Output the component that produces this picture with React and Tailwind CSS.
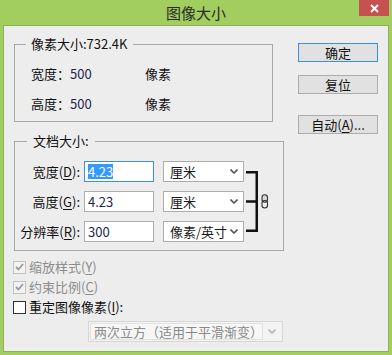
const font = { fontFamily: '"Noto Sans CJK SC", "Noto Sans", sans-serif' }

function Chevron({ color = '#555' }) {
  return (
    <svg width="8" height="5" viewBox="0 0 8 5" className="shrink-0">
      <path d="M0.5 0.5 L4 4 L7.5 0.5" fill="none" stroke={color} strokeWidth="1.6" />
    </svg>
  )
}

function Key({ children }) {
  return <span className="underline underline-offset-2">{children}</span>
}

function Field({ value, focused }) {
  return (
    <div
      className={`flex h-[21px] w-[70px] items-center border bg-white pl-[3px] text-[13px] ${
        focused ? 'border-[#3d8ee0]' : 'border-[#abadb3]'
      }`}
    >
      {focused ? (
        <span className="bg-[#3399ff] leading-[15px] text-white">{value}</span>
      ) : (
        <span className="leading-[15px] text-[#1c2650]">{value}</span>
      )}
    </div>
  )
}

function Unit({ text }) {
  return (
    <div className="flex h-[21px] w-[81px] items-center justify-between border border-[#acacac] bg-white pl-[6px] pr-[5px] text-[13px] text-[#1a1a1a]">
      <span className="leading-[15px]">{text}</span>
      <Chevron />
    </div>
  )
}

function Check({ checked, disabled, children }) {
  return (
    <div className="flex h-[20px] items-center">
      <span
        className={`grid h-[13px] w-[13px] place-items-center border ${
          disabled ? 'border-[#c2c2c2] bg-[#f3f3f3]' : 'border-[#333] bg-white'
        }`}
      >
        {checked && (
          <svg width="9" height="8" viewBox="0 0 9 8">
            <path d="M1 4 L3.5 6.5 L8 1" fill="none" stroke="#9a9a9a" strokeWidth="1.8" />
          </svg>
        )}
      </span>
      <span className={`ml-[3px] text-[13px] leading-[16px] ${disabled ? 'text-[#8c8c8c]' : 'text-[#111]'}`}>
        {children}
      </span>
    </div>
  )
}

function Button({ primary, children }) {
  return (
    <button
      className={`h-[19px] w-[80px] border bg-[#e1e1e1] text-[13px] leading-[15px] text-[#111] ${
        primary ? 'border-[#3c8fe0]' : 'border-[#adadad]'
      }`}
    >
      {children}
    </button>
  )
}

export default function App() {
  return (
    <div className="flex h-[355px] w-[392px] flex-col bg-[#a2cd5f]" style={font}>
      <div className="relative flex h-[25px] shrink-0 items-center justify-center">
        <span className="text-[15px] leading-[18px] text-[#2b2b2b]">图像大小</span>
        <div className="absolute right-[3px] top-0 grid h-[16px] w-[30px] place-items-center bg-[#c75050]">
          <svg width="9" height="9" viewBox="0 0 9 9">
            <path d="M1 1 L8 8 M8 1 L1 8" stroke="#fff" strokeWidth="2" />
          </svg>
        </div>
      </div>

      <div className="mx-[3px] mb-[3px] flex flex-1 flex-col border border-[#8db157] bg-[#ededed]">
        <div className="flex items-start">
          <div className="ml-[10px] flex flex-col pt-[10px]">
            <fieldset className="w-[259px] border border-[#a8a8a8] pb-[9px]">
              <legend className="ml-[11px] px-[5px] text-[13px] leading-[16px] text-[#111]">像素大小:732.4K</legend>
              <div className="mt-[14px] flex pl-[16px] text-[13px] leading-[16px] text-[#111]">
                <span className="w-[114px]">
                  宽度：<span className="text-[#1c2650]">500</span>
                </span>
                <span>像素</span>
              </div>
              <div className="mt-[14px] flex pl-[16px] text-[13px] leading-[16px] text-[#111]">
                <span className="w-[114px]">
                  高度：<span className="text-[#1c2650]">500</span>
                </span>
                <span>像素</span>
              </div>
            </fieldset>

            <fieldset className="mt-[11px] w-[270px] border border-[#a8a8a8] pb-[8px]">
              <legend className="ml-[12px] px-[6px] text-[13px] leading-[16px] text-[#111]">文档大小:</legend>
              <div className="mt-[12px] flex items-center">
                <div className="grid grid-cols-[65px_70px_81px] items-center gap-x-[4px] gap-y-[9px] text-[13px] text-[#111]">
                  <span className="text-right leading-[16px]">
                    宽度(<Key>D</Key>):
                  </span>
                  <Field value="4.23" focused />
                  <div className="ml-[5px]">
                    <Unit text="厘米" />
                  </div>
                  <span className="text-right leading-[16px]">
                    高度(<Key>G</Key>):
                  </span>
                  <Field value="4.23" />
                  <div className="ml-[5px]">
                    <Unit text="厘米" />
                  </div>
                  <span className="whitespace-nowrap text-right leading-[16px]">
                    分辨率(<Key>R</Key>):
                  </span>
                  <Field value="300" />
                  <div className="ml-[5px]">
                    <Unit text="像素/英寸" />
                  </div>
                </div>
                <svg width="12" height="61" viewBox="0 0 12 61" className="ml-[7px] shrink-0">
                  <path d="M0 1.25 H10.75 V59.75 H0 M0 30.5 H10.75" fill="none" stroke="#111" strokeWidth="2.5" />
                </svg>
                <svg width="8" height="15" viewBox="0 0 8 15" className="ml-[3px] shrink-0">
                  <rect x="1" y="0.8" width="5.5" height="7.5" rx="2.7" fill="#d8d8d8" stroke="#333" strokeWidth="1.1" />
                  <rect x="1" y="6.5" width="5.5" height="7.5" rx="2.7" fill="none" stroke="#333" strokeWidth="1.1" />
                </svg>
              </div>
            </fieldset>
          </div>

          <div className="ml-[14px] flex flex-col pt-[17px]">
            <Button primary>确定</Button>
            <div className="mt-[9px]">
              <Button>复位</Button>
            </div>
            <div className="mt-[16px]">
              <Button>
                自动(<Key>A</Key>)...
              </Button>
            </div>
          </div>
        </div>

        <div className="ml-[9px] mt-[6px] flex flex-col">
          <Check checked disabled>
            缩放样式(<Key>Y</Key>)
          </Check>
          <Check checked disabled>
            约束比例(<Key>C</Key>)
          </Check>
          <Check>
            重定图像像素(<Key>I</Key>):
          </Check>
        </div>

        <div className="ml-[84px] mt-[4px] flex h-[21px] w-[195px] items-center border border-[#d6d6d6] bg-[#f3f3f3] p-[1px]">
          <div className="flex h-full flex-1 items-center border border-[#e2e2e2] bg-[#f6f6f6] pl-[3px] text-[13px] leading-[15px] text-[#8a8a8a]">
            两次立方（适用于平滑渐变）
          </div>
          <div className="flex w-[18px] justify-center">
            <Chevron color="#b5b5b5" />
          </div>
        </div>
      </div>
    </div>
  )
}
